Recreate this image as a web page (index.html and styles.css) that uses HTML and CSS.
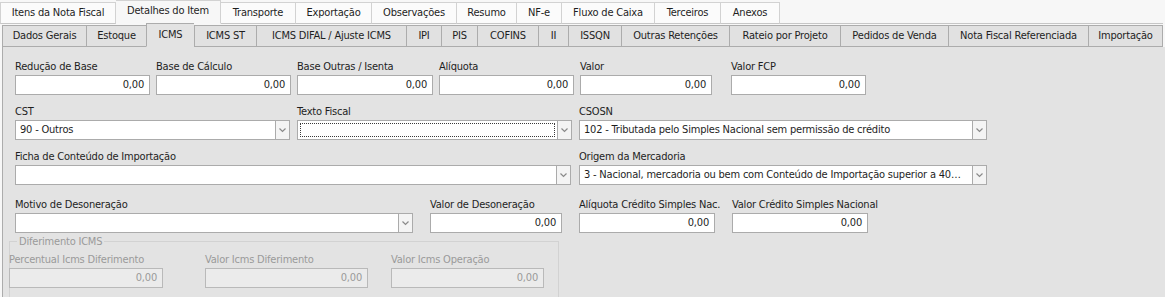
FILE: index.html
```html
<!DOCTYPE html>
<html lang="pt-BR">
<head>
    <meta charset="UTF-8">
    <title>Detalhes do Item - ICMS</title>
    <link rel="stylesheet" href="styles.css">
</head>
<body>
    <!-- abas principais -->
    <div class="tabs-top">
        <div class="tab">Itens da Nota Fiscal</div>
        <div class="tab active">Detalhes do Item</div>
        <div class="tab">Transporte</div>
        <div class="tab">Exportação</div>
        <div class="tab">Observações</div>
        <div class="tab">Resumo</div>
        <div class="tab">NF-e</div>
        <div class="tab">Fluxo de Caixa</div>
        <div class="tab">Terceiros</div>
        <div class="tab">Anexos</div>
        <div class="tab-fill"></div>
    </div>

    <!-- abas do item -->
    <div class="tabs-sub">
        <div class="tab">Dados Gerais</div>
        <div class="tab">Estoque</div>
        <div class="tab active">ICMS</div>
        <div class="tab">ICMS ST</div>
        <div class="tab">ICMS DIFAL / Ajuste ICMS</div>
        <div class="tab">IPI</div>
        <div class="tab">PIS</div>
        <div class="tab">COFINS</div>
        <div class="tab">II</div>
        <div class="tab">ISSQN</div>
        <div class="tab">Outras Retenções</div>
        <div class="tab">Rateio por Projeto</div>
        <div class="tab">Pedidos de Venda</div>
        <div class="tab">Nota Fiscal Referenciada</div>
        <div class="tab">Importação</div>
    </div>

    <!-- painel ICMS -->
    <div class="panel">
        <div class="row row-valores">
            <div class="field w135"><label>Redução de Base</label><div class="box num">0,00</div></div>
            <div class="field w135"><label>Base de Cálculo</label><div class="box num">0,00</div></div>
            <div class="field w136"><label>Base Outras / Isenta</label><div class="box num">0,00</div></div>
            <div class="field w135"><label>Alíquota</label><div class="box num">0,00</div></div>
            <div class="field w132 extra"><label>Valor</label><div class="box num">0,00</div></div>
            <div class="field w135"><label>Valor FCP</label><div class="box num">0,00</div></div>
        </div>

        <div class="row row-cst">
            <div class="field w275">
                <label>CST</label>
                <div class="combo"><div class="box">90 - Outros</div><div class="drop"><svg width="7" height="5" viewBox="0 0 7 5"><polyline points="0.5,0.5 3.5,3.5 6.5,0.5" fill="none" stroke="#8a8a8a" stroke-width="1.2"/></svg></div></div>
            </div>
            <div class="field w275">
                <label>Texto Fiscal</label>
                <div class="combo"><div class="box focus"><span class="focus-rect"></span></div><div class="drop"><svg width="7" height="5" viewBox="0 0 7 5"><polyline points="0.5,0.5 3.5,3.5 6.5,0.5" fill="none" stroke="#8a8a8a" stroke-width="1.2"/></svg></div></div>
            </div>
            <div class="field w408">
                <label>CSOSN</label>
                <div class="combo"><div class="box">102 - Tributada pelo Simples Nacional sem permissão de crédito</div><div class="drop"><svg width="7" height="5" viewBox="0 0 7 5"><polyline points="0.5,0.5 3.5,3.5 6.5,0.5" fill="none" stroke="#8a8a8a" stroke-width="1.2"/></svg></div></div>
            </div>
        </div>

        <div class="row row-ficha">
            <div class="field w556">
                <label>Ficha de Conteúdo de Importação</label>
                <div class="combo"><div class="box"></div><div class="drop"><svg width="7" height="5" viewBox="0 0 7 5"><polyline points="0.5,0.5 3.5,3.5 6.5,0.5" fill="none" stroke="#8a8a8a" stroke-width="1.2"/></svg></div></div>
            </div>
            <div class="field w408">
                <label>Origem da Mercadoria</label>
                <div class="combo"><div class="box">3 - Nacional, mercadoria ou bem com Conteúdo de Importação superior a 40…</div><div class="drop"><svg width="7" height="5" viewBox="0 0 7 5"><polyline points="0.5,0.5 3.5,3.5 6.5,0.5" fill="none" stroke="#8a8a8a" stroke-width="1.2"/></svg></div></div>
            </div>
        </div>

        <div class="row row-deson">
            <div class="field w398">
                <label>Motivo de Desoneração</label>
                <div class="combo"><div class="box"></div><div class="drop"><svg width="7" height="5" viewBox="0 0 7 5"><polyline points="0.5,0.5 3.5,3.5 6.5,0.5" fill="none" stroke="#8a8a8a" stroke-width="1.2"/></svg></div></div>
            </div>
            <div class="field w132"><label>Valor de Desoneração</label><div class="box num">0,00</div></div>
            <div class="field w136"><label>Alíquota Crédito Simples Nac.</label><div class="box num">0,00</div></div>
            <div class="field w136"><label>Valor Crédito Simples Nacional</label><div class="box num">0,00</div></div>
        </div>

        <!-- grupo desabilitado -->
        <fieldset class="group">
            <legend>Diferimento ICMS</legend>
            <div class="row row-difer">
                <div class="field w154"><label>Percentual Icms Diferimento</label><div class="box num">0,00</div></div>
                <div class="field w163 near"><label>Valor Icms Diferimento</label><div class="box num">0,00</div></div>
                <div class="field w153"><label>Valor Icms Operação</label><div class="box num">0,00</div></div>
            </div>
        </fieldset>
    </div>
</body>
</html>
```

FILE: styles.css
```css
/* base */
body {
    margin: 0;
    width: 1165px;
    height: 297px;
    overflow: hidden;
    background-color: #f7f7f7;
    font-family: "DejaVu Sans Condensed", "Liberation Sans", sans-serif;
    font-size: 11px;
    letter-spacing: -0.2px;
    color: #1e1e1e;
}

/* abas de cima */
.tabs-top {
    display: grid;
    grid-template-columns: 116px 105px 75px 76px 85px 60px 45px 93px 66px 59px 383px;
    align-items: end;
    height: 23px;
}

.tabs-top .tab {
    height: 20px;
    line-height: 19px;
    text-align: center;
    background-color: #fbfbfb;
    border-top: 1px solid #d2d2d2;
    border-right: 1px solid #d2d2d2;
    border-bottom: 1px solid #c6c6c6;
}

.tabs-top .tab:first-child {
    border-left: 1px solid #d2d2d2;
}

.tabs-top .tab.active {
    height: 22px;
    line-height: 20px;
    background-color: #f7f7f7;
    border-bottom-color: #f7f7f7;
}

.tab-fill {
    height: 23px;
    border-bottom: 1px solid #c6c6c6;
    box-sizing: border-box;
}

/* abas do item */
.tabs-sub {
    display: grid;
    grid-template-columns: 84px 60px 48px 62px 150px 35px 36px 61px 30px 53px 108px 111px 108px 140px 75px;
    align-items: end;
    margin-left: 2px;
    width: 1161px;
    height: 24px;
}

.tabs-sub .tab {
    height: 20px;
    line-height: 20px;
    text-align: center;
    background-color: #e1e1e1;
    border-top: 1px solid #acacac;
    border-left: 1px solid #acacac;
    border-bottom: 1px solid #acacac;
}

.tabs-sub .tab:last-child {
    border-right: 1px solid #acacac;
}

.tabs-sub .tab.active {
    height: 22px;
    line-height: 21px;
    background-color: #e3e3e3;
    border-bottom-color: #e3e3e3;
}

/* painel */
.panel {
    margin-left: 2px;
    width: 1159px;
    height: 237px;
    overflow: hidden;
    background-color: #e3e3e3;
    border-left: 1px solid #acacac;
    border-right: 1px solid #acacac;
    padding-top: 13px;
    padding-left: 12px;
}

.row {
    display: flex;
    align-items: flex-start;
}

.row-valores { column-gap: 6px; }
.row-cst { column-gap: 7px; margin-top: 10px; }
.row-ficha { column-gap: 8px; margin-top: 10px; }
.row-deson { column-gap: 17px; margin-top: 13px; }
.row-difer { column-gap: 42px; }

.field label {
    display: block;
    height: 13px;
    line-height: 13px;
    margin-bottom: 2px;
    white-space: nowrap;
}

.field.extra { margin-right: 13px; }
.field.near { margin-right: -19px; }

.w132 { width: 132px; }
.w135 { width: 135px; }
.w136 { width: 136px; }
.w153 { width: 153px; }
.w154 { width: 154px; }
.w163 { width: 163px; }
.w275 { width: 275px; }
.w398 { width: 398px; }
.w408 { width: 408px; }
.w556 { width: 556px; }

.box {
    height: 20px;
    line-height: 18px;
    padding: 0 4px;
    background-color: #ffffff;
    border: 1px solid #ababab;
    box-sizing: border-box;
    white-space: nowrap;
    overflow: hidden;
}

.box.num {
    text-align: right;
    padding-right: 5px;
}

/* combo com botao */
.combo {
    display: flex;
    height: 20px;
}

.combo .box {
    flex: 1;
    min-width: 0;
}

.combo .box.focus {
    padding: 2px;
}

.focus-rect {
    display: block;
    height: 14px;
    border: 1px dotted #3a3a3a;
    box-sizing: border-box;
}

.drop {
    width: 14px;
    height: 20px;
    display: flex;
    align-items: center;
    justify-content: center;
    background-color: #f4f4f4;
    border: 1px solid #ababab;
    border-left: none;
    box-sizing: border-box;
}

/* grupo diferimento */
.group {
    margin: 3px 0 0 -6px;
    padding: 0;
    width: 548px;
    height: 60px;
    min-inline-size: 0;
    border: 1px solid #d2d2d2;
    color: #9a9a9a;
}

.group legend {
    margin-left: 7px;
    padding: 0 2px;
    line-height: 11px;
}

.group .box {
    background-color: #ebebeb;
    border-color: #b9b9b9;
    color: #9a9a9a;
}

.group .row-difer {
    margin-left: -1px;
    margin-top: 6px;
}
```
